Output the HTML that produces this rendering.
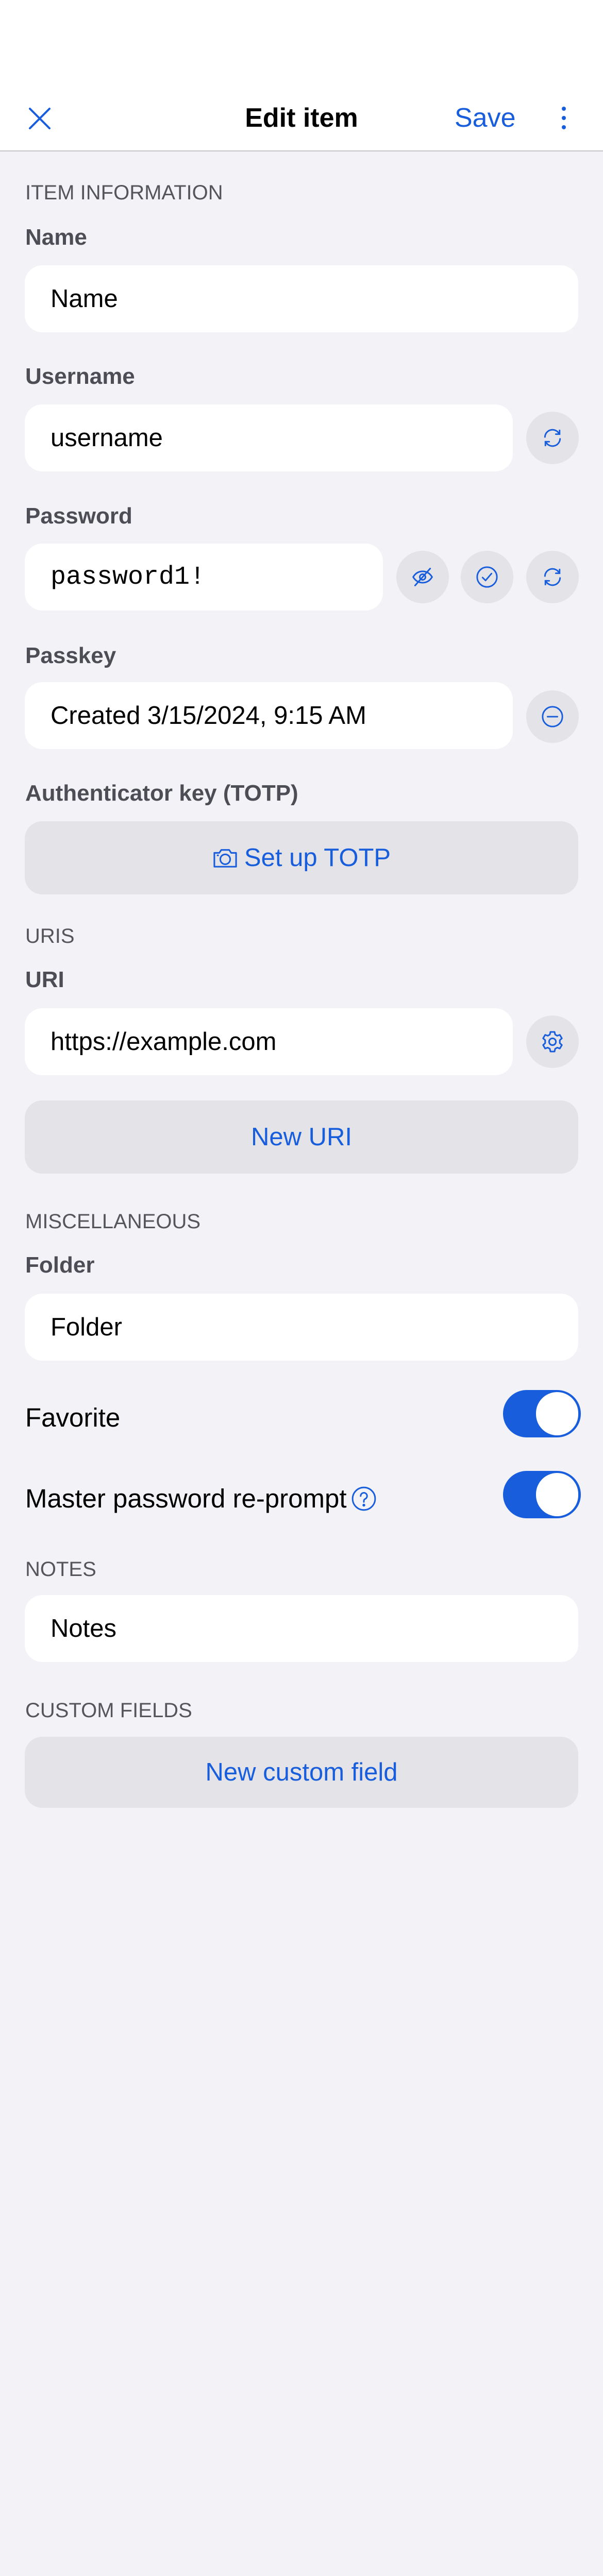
<!DOCTYPE html>
<html><head><meta charset="utf-8"><style>
*{margin:0;padding:0;box-sizing:border-box}
html{width:1170px;height:5064px;overflow:hidden}
body{width:1170px;height:5064px;background:#f2f2f7;font-family:"Liberation Sans",Arial,sans-serif;position:relative;overflow:hidden}
.a{position:absolute}
.hdr{left:0;top:0;width:1170px;height:294px;background:#fff;border-bottom:2px solid #c6c6c8}
.sec{left:49px;font-size:40px;color:#55555c;line-height:1}
.lbl{left:49px;font-size:44px;font-weight:bold;color:#4d4d55;line-height:1}
.fld{left:48px;height:130px;background:#fff;border-radius:34px;font-size:49px;color:#000;padding-left:50px;display:flex;align-items:center}
.circ{width:102px;height:102px;border-radius:51px;background:#e3e3e8;display:flex;align-items:center;justify-content:center}
.btn{left:48px;width:1074px;height:142px;border-radius:34px;background:#e3e3e8;color:#175ddc;font-size:49px;display:flex;align-items:center;justify-content:center}
.tog{left:976px;width:151px;height:92px;border-radius:46px;background:#175ddc}
.tog::after{content:"";position:absolute;right:5px;top:4px;width:82px;height:84px;border-radius:42px;background:#fff}
.row{left:49px;font-size:51px;color:#000;line-height:1}
svg{display:block}
</style></head><body>
<div class="a hdr"></div>
<svg class="a" style="left:55px;top:208px" width="44" height="44" viewBox="0 0 44 44"><path d="M3 3L41 41M41 3L3 41" stroke="#175ddc" stroke-width="4" stroke-linecap="round"/></svg>
<div class="a" style="left:0;width:1170px;top:202px;text-align:center;font-size:52px;font-weight:bold;line-height:54px">Edit item</div>
<div class="a" style="left:882px;top:202px;font-size:52px;color:#175ddc;line-height:54px">Save</div>
<svg class="a" style="left:1086px;top:206px" width="16" height="46" viewBox="0 0 16 46"><circle cx="8" cy="5" r="4" fill="#175ddc"/><circle cx="8" cy="23" r="4" fill="#175ddc"/><circle cx="8" cy="41" r="4" fill="#175ddc"/></svg>

<div class="a sec" style="top:354px">ITEM INFORMATION</div>
<div class="a lbl" style="top:439px">Name</div>
<div class="a fld" style="top:515px;width:1074px">Name</div>

<div class="a lbl" style="top:709px">Username</div>
<div class="a fld" style="top:785px;width:947px">username</div>
<div class="a circ" style="left:1021px;top:799px"><svg width="44" height="44" viewBox="0 0 24 24" fill="none" stroke="#175ddc" stroke-width="1.6" stroke-linecap="round"><path d="M4 11a8 8 0 0 1 15-3.5M20 13a8 8 0 0 1-15 3.5"/><path d="M19.5 4v4h-4M4.5 20v-4h4"/></svg></div>

<div class="a lbl" style="top:980px">Password</div>
<div class="a fld" style="top:1055px;width:695px;font-family:'Liberation Mono',monospace;font-size:50px">password1!</div>
<div class="a circ" style="left:769px;top:1069px"><svg width="44" height="44" viewBox="0 0 24 24" fill="none" stroke="#175ddc" stroke-width="1.6" stroke-linecap="round"><path d="M2 12c3-5 7-6 10-6s7 1 10 6c-3 5-7 6-10 6s-7-1-10-6z"/><circle cx="12" cy="12" r="3"/><path d="M4 21L20 3"/></svg></div>
<div class="a circ" style="left:894px;top:1069px"><svg width="46" height="46" viewBox="0 0 24 24" fill="none" stroke="#175ddc" stroke-width="1.5" stroke-linecap="round" stroke-linejoin="round"><circle cx="12" cy="12" r="10"/><path d="M7.5 12.5l3 3 6-7"/></svg></div>
<div class="a circ" style="left:1021px;top:1069px"><svg width="44" height="44" viewBox="0 0 24 24" fill="none" stroke="#175ddc" stroke-width="1.6" stroke-linecap="round"><path d="M4 11a8 8 0 0 1 15-3.5M20 13a8 8 0 0 1-15 3.5"/><path d="M19.5 4v4h-4M4.5 20v-4h4"/></svg></div>

<div class="a lbl" style="top:1251px">Passkey</div>
<div class="a fld" style="top:1324px;width:947px">Created 3/15/2024, 9:15 AM</div>
<div class="a circ" style="left:1021px;top:1340px"><svg width="46" height="46" viewBox="0 0 24 24" fill="none" stroke="#175ddc" stroke-width="1.5" stroke-linecap="round"><circle cx="12" cy="12" r="10"/><path d="M7 12h10"/></svg></div>

<div class="a lbl" style="top:1518px">Authenticator key (TOTP)</div>
<div class="a btn" style="top:1594px"><svg width="50" height="46" viewBox="0 0 26 24" fill="none" stroke="#175ddc" stroke-width="1.6" stroke-linejoin="round" style="margin-right:12px"><path d="M2 7h5l2-3h8l2 3h5v14H2z"/><circle cx="13" cy="13.5" r="5"/><path d="M4.5 9.5h2"/></svg>Set up TOTP</div>

<div class="a sec" style="top:1797px">URIS</div>
<div class="a lbl" style="top:1880px">URI</div>
<div class="a fld" style="top:1957px;width:947px">https://example.com</div>
<div class="a circ" style="left:1021px;top:1971px"><svg width="48" height="48" viewBox="0 0 24 24" fill="none" stroke="#175ddc" stroke-width="1.5" stroke-linejoin="round"><path d="M10 2.5h4l.6 2.6 2 1.1 2.5-.9 2 3.4-2 1.8v2.9l2 1.8-2 3.4-2.5-.9-2 1.1-.6 2.7h-4l-.6-2.7-2-1.1-2.5.9-2-3.4 2-1.8v-2.9l-2-1.8 2-3.4 2.5.9 2-1.1z"/><circle cx="12" cy="12" r="3.3"/></svg></div>
<div class="a btn" style="top:2136px">New URI</div>

<div class="a sec" style="top:2351px">MISCELLANEOUS</div>
<div class="a lbl" style="top:2434px">Folder</div>
<div class="a fld" style="top:2511px;width:1074px">Folder</div>

<div class="a row" style="top:2726px">Favorite</div>
<div class="a tog" style="top:2698px"></div>
<div class="a row" style="top:2883px;display:flex;align-items:center">Master password re-prompt<svg style="margin-left:8px" width="50" height="50" viewBox="0 0 24 24" fill="none" stroke="#175ddc" stroke-width="1.4" stroke-linecap="round"><circle cx="12" cy="12" r="10.5"/><path d="M9 9.5a3 3 0 1 1 4.2 2.7c-.8.4-1.2 1-1.2 1.8v1"/><circle cx="12" cy="18" r=".6" fill="#175ddc"/></svg></div>
<div class="a tog" style="top:2855px"></div>

<div class="a sec" style="top:3026px">NOTES</div>
<div class="a fld" style="top:3096px;width:1074px">Notes</div>

<div class="a sec" style="top:3300px">CUSTOM FIELDS</div>
<div class="a btn" style="top:3371px;height:138px">New custom field</div>
</body></html>
